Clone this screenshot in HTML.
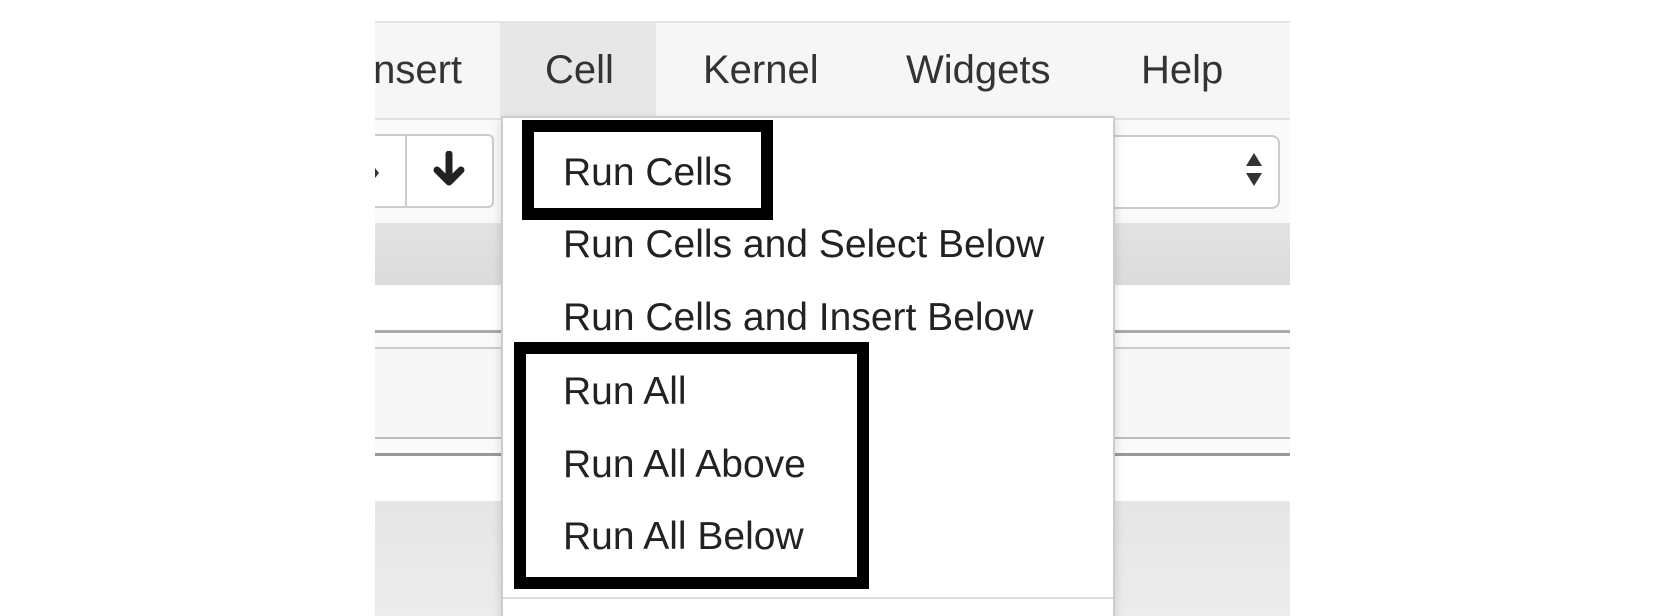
<!DOCTYPE html>
<html style="overflow:hidden;height:616px"><head><style>
body{margin:0;width:1665px;height:616px;background:#fff;position:relative;overflow:hidden;font-family:"Liberation Sans",Arial,sans-serif;}
.a{position:absolute;}
.m{font-size:40px;color:#333;top:48px;}
.it{position:absolute;left:563px;font-size:39px;color:#222;}
</style></head><body>
<div class="a" style="left:375px;top:21px;width:915px;height:595px;background:#fafafa"></div>
<div class="a" style="left:375px;top:21px;width:915px;height:95px;background:#f6f6f6;border-top:2px solid #e4e4e4;border-bottom:2px solid #e2e2e2"></div>
<div class="a" style="left:500px;top:23px;width:156px;height:95px;background:#e7e7e7"></div>
<div class="a" style="left:375px;top:23px;width:125px;height:90px;overflow:hidden"><span class="a m" style="left:-13px;top:25px">Insert</span></div>
<span class="a m" style="left:545px">Cell</span>
<span class="a m" style="left:703px">Kernel</span>
<span class="a m" style="left:906px">Widgets</span>
<span class="a m" style="left:1141px">Help</span>
<div class="a" style="left:375px;top:134px;width:117px;height:70px;border:2px solid #ccc;border-left:none;border-radius:0 6px 6px 0;background:#fff"></div>
<div class="a" style="left:405px;top:134px;width:2px;height:72px;background:#ccc"></div>
<div class="a" style="left:375px;top:168px;width:0;height:0;border-left:4px solid #333;border-top:5px solid transparent;border-bottom:5px solid transparent"></div>
<svg class="a" style="left:432px;top:151px" width="34" height="36" viewBox="0 0 34 36"><path d="M17 3V30M5 19L17 31L29 19" stroke="#222" stroke-width="7" fill="none" stroke-linecap="round" stroke-linejoin="round"/></svg>
<div class="a" style="left:1100px;top:135px;width:176px;height:70px;border:2px solid #ccc;border-radius:8px;background:#fff"></div>
<div class="a" style="left:1246px;top:153px;border-left:8px solid transparent;border-right:8px solid transparent;border-bottom:13px solid #333"></div>
<div class="a" style="left:1246px;top:173px;border-left:8px solid transparent;border-right:8px solid transparent;border-top:13px solid #333"></div>
<div class="a" style="left:375px;top:223px;width:915px;height:62px;background:linear-gradient(#e2e2e2,#dcdcdc)"></div>
<div class="a" style="left:375px;top:285px;width:915px;height:45px;background:#fff"></div>
<div class="a" style="left:375px;top:330px;width:915px;height:3px;background:#aaa"></div>
<div class="a" style="left:375px;top:347px;width:915px;height:88px;background:#f7f7f7;border-top:2px solid #ccc;border-bottom:2px solid #bbb"></div>
<div class="a" style="left:375px;top:453px;width:915px;height:3px;background:#999"></div>
<div class="a" style="left:375px;top:456px;width:915px;height:45px;background:#fff"></div>
<div class="a" style="left:375px;top:501px;width:915px;height:115px;background:linear-gradient(#e6e6e6,#ececec)"></div>
<div class="a" style="left:501px;top:116px;width:610px;height:500px;background:#fff;border:2px solid #ccc;border-bottom:none;box-shadow:0 4px 10px rgba(0,0,0,.15)"></div>
<div class="a" style="left:503px;top:597px;width:610px;height:2px;background:#ddd"></div>
<div class="a" style="left:522px;top:120px;width:227px;height:76px;border:12px solid #000"></div>
<div class="a" style="left:514px;top:342px;width:331px;height:223px;border:12px solid #000"></div>
<span class="it" style="top:151px">Run Cells</span>
<span class="it" style="top:223px">Run Cells and Select Below</span>
<span class="it" style="top:296px">Run Cells and Insert Below</span>
<span class="it" style="top:370px">Run All</span>
<span class="it" style="top:443px">Run All Above</span>
<span class="it" style="top:515px">Run All Below</span>
</body></html>
